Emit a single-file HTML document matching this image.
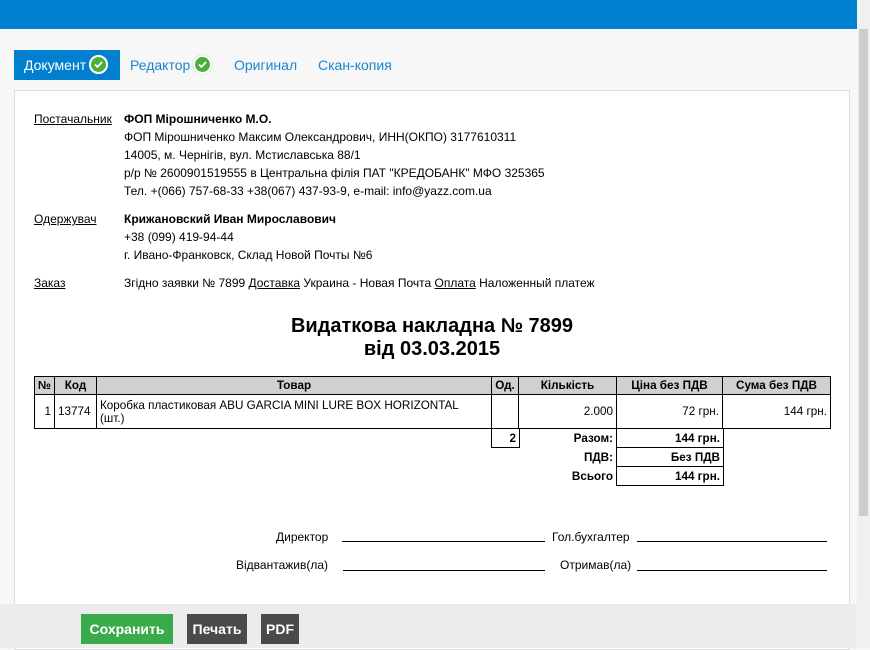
<!DOCTYPE html>
<html><head><meta charset="utf-8"><style>
*{margin:0;padding:0;box-sizing:border-box}
body{width:870px;height:648px;overflow:hidden;background:#f7f7f7;font-family:"Liberation Sans",Arial,sans-serif;position:relative}
.a{position:absolute}
.top{left:0;top:0;width:857px;height:29px;background:#0280d0}
.sb{left:857px;top:0;width:13px;height:648px;background:#f0f0f0}
.th{left:859px;top:29px;width:9px;height:487px;background:#cdcdcd}
.tab{top:50px;height:30px;font-size:14px;line-height:30px;color:#1a86d0}
.chk{display:inline-block;width:19px;height:19px;border-radius:50%;background:#4cae3c;border:2px solid #fff;box-shadow:0 0 1px #888;vertical-align:middle;margin-left:3px;position:relative;top:-2px}
.chk svg{position:absolute;left:2px;top:2px}
.panel{left:14px;top:90px;width:836px;height:560px;background:#fff;border:1px solid #ddd}
.t{font-size:12px;color:#000;line-height:18px;white-space:nowrap}
.u{text-decoration:underline}
b{font-weight:bold}
table{border-collapse:collapse;font-size:11.7px;table-layout:fixed}
td{border:1px solid #000;padding:1px 3px}
.foot{left:0;top:604px;width:857px;height:44px;background:#ececec}
.btn{top:614px;height:30px;color:#fff;font-weight:bold;font-size:14px;line-height:30px;text-align:center}
.ln{height:1px;background:#000}
</style></head><body>
<div class="a top"></div>
<div class="a sb"></div><div class="a th"></div>
<div class="a tab" style="left:14px;width:106px;background:#0280d0;color:#fff;padding-left:10px">Документ<span class="chk"><svg width="11" height="11" viewBox="0 0 11 11"><path d="M2 5.5l2.5 2.5 4.5-5" stroke="#fff" stroke-width="1.8" fill="none"/></svg></span></div>
<div class="a tab" style="left:130px">Редактор<span class="chk"><svg width="11" height="11" viewBox="0 0 11 11"><path d="M2 5.5l2.5 2.5 4.5-5" stroke="#fff" stroke-width="1.8" fill="none"/></svg></span></div>
<div class="a tab" style="left:234px">Оригинал</div>
<div class="a tab" style="left:318px">Скан-копия</div>
<div class="a panel"></div>
<div class="a t u" style="left:34px;top:110px">Постачальник</div>
<div class="a t" style="left:124px;top:110px"><b>ФОП Мірошниченко М.О.</b><br>ФОП Мірошниченко Максим Олександрович, ИНН(ОКПО) 3177610311<br>14005, м. Чернігів, вул. Мстиславська 88/1<br>р/р № 2600901519555 в Центральна філія ПАТ "КРЕДОБАНК" МФО 325365<br>Тел. +(066) 757-68-33 +38(067) 437-93-9, e-mail: info@yazz.com.ua</div>
<div class="a t u" style="left:34px;top:210px">Одержувач</div>
<div class="a t" style="left:124px;top:210px"><b>Крижановский Иван Мирославович</b><br>+38 (099) 419-94-44<br>г. Ивано-Франковск, Склад Новой Почты №6</div>
<div class="a t u" style="left:34px;top:274px">Заказ</div>
<div class="a t" style="left:124px;top:274px">Згідно заявки № 7899 <span class="u">Доставка</span> Украина - Новая Почта <span class="u">Оплата</span> Наложенный платеж</div>
<div class="a" style="left:14px;width:836px;top:315px;text-align:center;font-weight:bold;font-size:20px;line-height:23px">Видаткова накладна № 7899<br>від 03.03.2015</div>
<table class="a" style="left:34px;top:376px;width:797px">
<colgroup><col style="width:20px"><col style="width:42px"><col style="width:395px"><col style="width:27px"><col style="width:98px"><col style="width:106px"><col></colgroup>
<tr style="background:#d0d0d0;font-weight:bold;height:18px;text-align:center"><td>№</td><td>Код</td><td>Товар</td><td>Од.</td><td>Кількість</td><td>Ціна без ПДВ</td><td>Сума без ПДВ</td></tr>
<tr style="height:34px"><td style="text-align:right">1</td><td>13774</td><td style="line-height:13px">Коробка пластиковая ABU GARCIA MINI LURE BOX HORIZONTAL<br>(шт.)</td><td></td><td style="text-align:right">2.000</td><td style="text-align:right">72 грн.</td><td style="text-align:right">144 грн.</td></tr>
</table>
<table class="a" style="left:491px;top:428px;font-weight:bold;width:232px">
<colgroup><col style="width:28px"><col style="width:97px"><col style="width:107px"></colgroup>
<tr style="height:19px"><td style="text-align:right">2</td><td style="border:0;text-align:right">Разом:</td><td style="text-align:right">144 грн.</td></tr>
<tr style="height:19px"><td style="border:0"></td><td style="border:0;text-align:right">ПДВ:</td><td style="text-align:right">Без ПДВ</td></tr>
<tr style="height:19px"><td style="border:0"></td><td style="border:0;text-align:right">Всього</td><td style="text-align:right">144 грн.</td></tr>
</table>
<div class="a t" style="left:276px;top:528px">Директор</div>
<div class="a ln" style="left:342px;top:541px;width:203px"></div>
<div class="a t" style="left:552px;top:528px">Гол.бухгалтер</div>
<div class="a ln" style="left:637px;top:541px;width:190px"></div>
<div class="a t" style="left:236px;top:556px">Відвантажив(ла)</div>
<div class="a ln" style="left:343px;top:570px;width:202px"></div>
<div class="a t" style="left:560px;top:556px">Отримав(ла)</div>
<div class="a ln" style="left:637px;top:570px;width:190px"></div>
<div class="a foot"></div>
<div class="a btn" style="left:81px;width:92px;background:#3aaa4a">Сохранить</div>
<div class="a btn" style="left:187px;width:60px;background:#4a4a4a">Печать</div>
<div class="a btn" style="left:261px;width:38px;background:#4a4a4a">PDF</div>
</body></html>
